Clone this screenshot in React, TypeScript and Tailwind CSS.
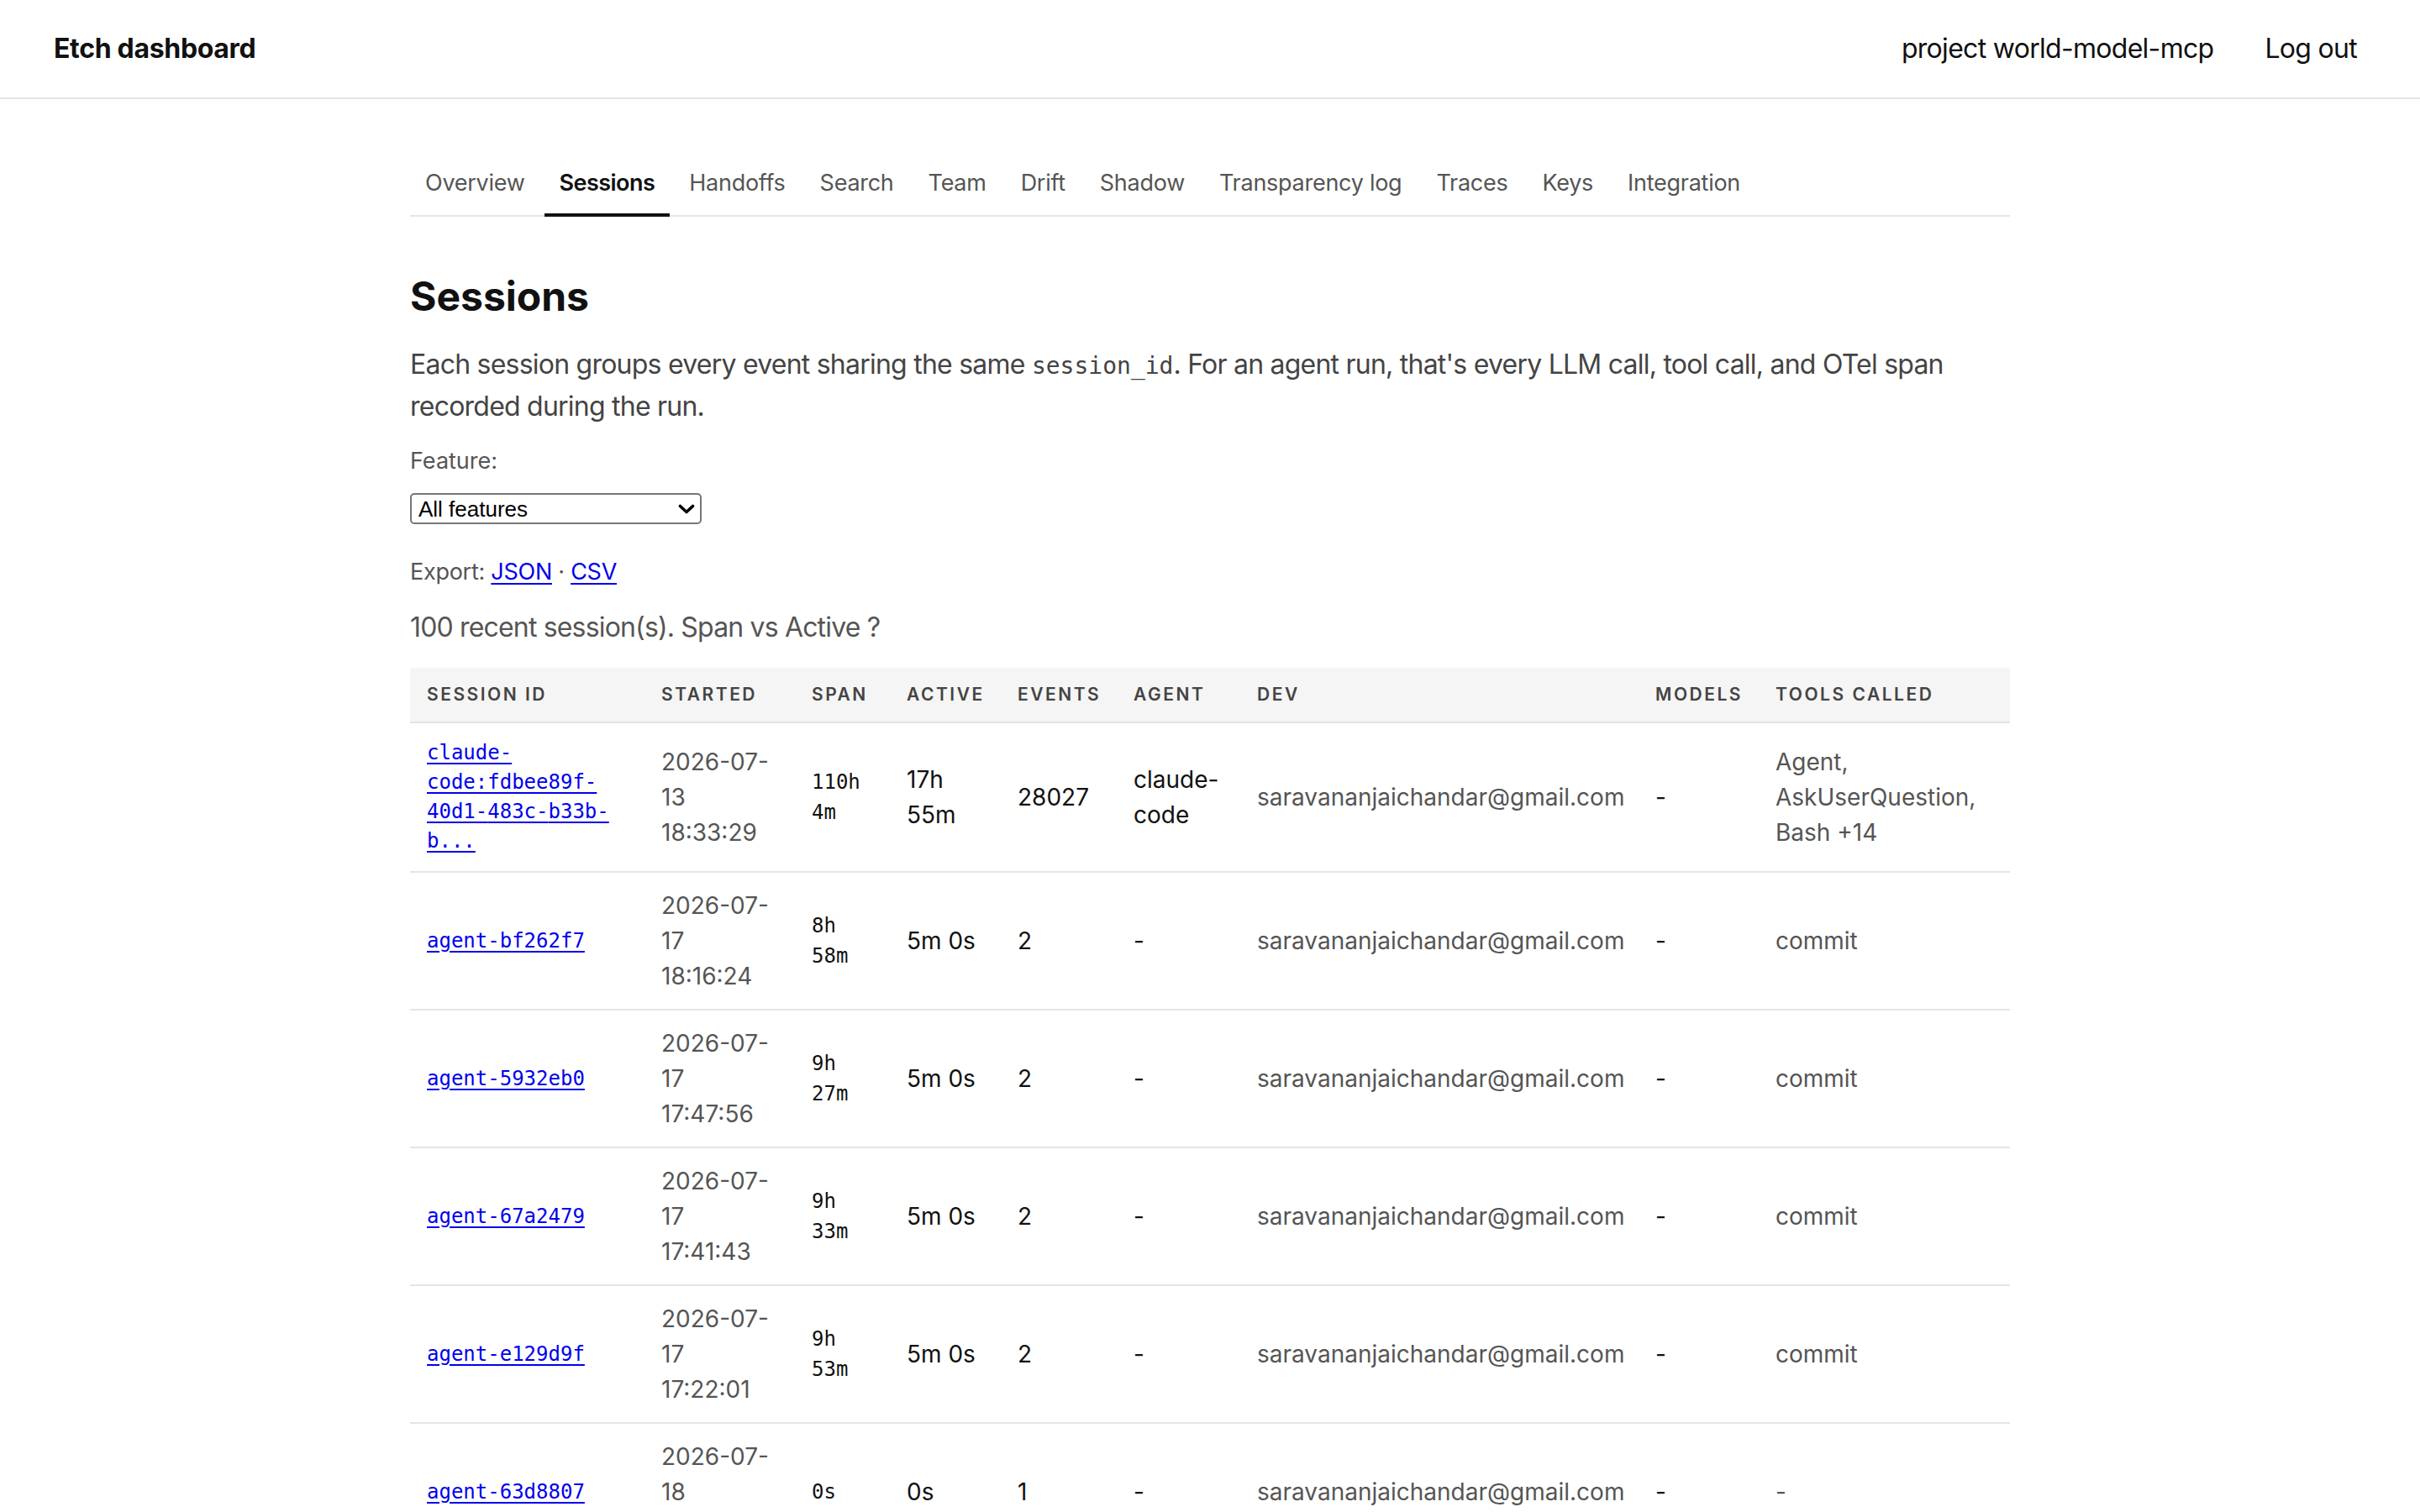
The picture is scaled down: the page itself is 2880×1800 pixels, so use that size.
import React from "react";

const tabs = ["Overview", "Sessions", "Handoffs", "Search", "Team", "Drift", "Shadow", "Transparency log", "Traces", "Keys", "Integration"];

type Row = {
  id: React.ReactNode;
  started: [string, string, string];
  span: string;
  active: string;
  events: string;
  agent: React.ReactNode;
  models: string;
  tools: React.ReactNode;
};

const email = "saravananjaichandar@gmail.com";

const rows: Row[] = [
  {
    id: (
      <>
        claude-<wbr />code:fdbee89f-<wbr />40d1-<wbr />483c-<wbr />b33b-<wbr />b...
      </>
    ),
    started: ["2026-07-", "13", "18:33:29"],
    span: "110h 4m",
    active: "17h 55m",
    events: "28027",
    agent: (
      <>
        claude-<wbr />code
      </>
    ),
    models: "-",
    tools: "Agent, AskUserQuestion, Bash +14",
  },
  { id: "agent-bf262f7", started: ["2026-07-", "17", "18:16:24"], span: "8h 58m", active: "5m 0s", events: "2", agent: "-", models: "-", tools: "commit" },
  { id: "agent-5932eb0", started: ["2026-07-", "17", "17:47:56"], span: "9h 27m", active: "5m 0s", events: "2", agent: "-", models: "-", tools: "commit" },
  { id: "agent-67a2479", started: ["2026-07-", "17", "17:41:43"], span: "9h 33m", active: "5m 0s", events: "2", agent: "-", models: "-", tools: "commit" },
  { id: "agent-e129d9f", started: ["2026-07-", "17", "17:22:01"], span: "9h 53m", active: "5m 0s", events: "2", agent: "-", models: "-", tools: "commit" },
  { id: "agent-63d8807", started: ["2026-07-", "18", "03:14:08"], span: "0s", active: "0s", events: "1", agent: "-", models: "-", tools: "-" },
  { id: "agent-2c41a9e", started: ["2026-07-", "17", "16:58:30"], span: "9h 41m", active: "5m 0s", events: "2", agent: "-", models: "-", tools: "commit" },
  { id: "agent-91fd0b3", started: ["2026-07-", "17", "16:40:12"], span: "9h 59m", active: "5m 0s", events: "2", agent: "-", models: "-", tools: "commit" },
];

const headers = ["Session ID", "Started", "Span", "Active", "Events", "Agent", "Dev", "Models", "Tools called"];

export default function App() {
  return (
    <div className="min-h-screen bg-white font-['Inter',sans-serif] text-[#111]">
      <header className="flex h-[118px] items-center justify-between border-b-2 border-[#e5e5e5] pl-[64px] pr-[75px]">
        <div className="text-[32px] font-bold leading-[48px] tracking-[-0.01em]">Etch dashboard</div>
        <nav className="flex items-center gap-[61px] text-[32px] leading-[48px] tracking-[-0.022em]">
          <span>project world-model-mcp</span>
          <span>Log out</span>
        </nav>
      </header>

      <main className="mx-auto w-[1904px] pt-[63px] pb-[80px]">
        <nav className="flex gap-[5px] border-b-2 border-[#e5e5e5]">
          {tabs.map((t) => (
            <span
              key={t}
              className={
                t === "Sessions"
                  ? "-mb-[2px] border-b-4 border-[#111] px-[18px] pt-[16px] pb-[15px] text-[27px] font-semibold leading-[42px] tracking-[-0.02em] text-[#111]"
                  : "-mb-[2px] border-b-4 border-transparent px-[18px] pt-[16px] pb-[15px] text-[27px] leading-[42px] tracking-[-0.01em] text-[#555]"
              }
            >
              {t}
            </span>
          ))}
        </nav>

        <h1 className="mt-[66px] text-[48px] font-bold leading-[58px] text-[#111]">Sessions</h1>

        <p className="mt-[28px] text-[32px] leading-[48px] tracking-[-0.024em] text-[#444]">
          Each session groups every event sharing the same{" "}
          <code className="font-['DejaVu_Sans_Mono',monospace] text-[28px] tracking-normal">session_id</code>. For an agent run, that's every LLM call, tool call, and OTel span recorded during the run.
        </p>

        <div className="mt-[20px] text-[27px] leading-[42px] text-[#555]">Feature:</div>

        <div className="mt-[17px] flex h-[37px] w-[347px] items-center justify-between rounded-[5px] border-2 border-[#767676] pl-[8px] pr-[5px] font-['Liberation_Sans',Arial,sans-serif] text-[26px] text-black">
          <span className="leading-[30px]">All features</span>
          <svg width="20" height="12" viewBox="0 0 20 12" className="mr-[1px]">
            <path d="M2.5 2.5 L10 9.5 L17.5 2.5" fill="none" stroke="#000" strokeWidth="3.6" strokeLinecap="round" strokeLinejoin="round" />
          </svg>
        </div>

        <div className="mt-[36px] text-[27px] leading-[42px] tracking-[-0.01em] text-[#555]">
          Export:{" "}
          <a className="text-[#0000ee] underline underline-offset-[4px]" href="#">
            JSON
          </a>{" "}
          ·{" "}
          <a className="text-[#0000ee] underline underline-offset-[4px]" href="#">
            CSV
          </a>
        </div>

        <div className="mt-[21px] text-[32px] leading-[48px] tracking-[-0.026em] text-[#555]">100 recent session(s). Span vs Active ?</div>

        <table className="mt-[24px] w-full table-fixed border-separate border-spacing-0">
          <colgroup>
            <col className="w-[279px]" />
            <col className="w-[179px]" />
            <col className="w-[113px]" />
            <col className="w-[132px]" />
            <col className="w-[138px]" />
            <col className="w-[147px]" />
            <col className="w-[474px]" />
            <col className="w-[143px]" />
            <col className="w-[299px]" />
          </colgroup>
          <thead>
            <tr className="bg-[#f5f5f5]">
              {headers.map((h) => (
                <th
                  key={h}
                  className="border-b-2 border-[#e2e2e2] px-[20px] py-[16px] text-left text-[21px] font-semibold uppercase leading-[32px] tracking-[0.12em] whitespace-nowrap text-[#444]"
                >
                  {h}
                </th>
              ))}
            </tr>
          </thead>
          <tbody>
            {rows.map((r, i) => (
              <tr key={i}>
                <td className="border-b-2 border-[#e5e5e5] px-[20px] py-[18px] align-middle">
                  <a href="#" className="font-['DejaVu_Sans_Mono',monospace] text-[24px] leading-[35px] text-[#0000ee] underline underline-offset-[4px]">
                    {r.id}
                  </a>
                </td>
                <td className="border-b-2 border-[#e5e5e5] px-[20px] py-[18px] align-middle text-[28px] leading-[42px] text-[#555]">
                  {r.started[0]}
                  <wbr />
                  {r.started[1]} {r.started[2]}
                </td>
                <td className="border-b-2 border-[#e5e5e5] px-[20px] py-[18px] align-middle font-['DejaVu_Sans_Mono',monospace] text-[24px] leading-[36px] text-[#111]">
                  {r.span}
                </td>
                <td className="border-b-2 border-[#e5e5e5] px-[20px] py-[18px] align-middle text-[28px] leading-[42px] text-[#111]">{r.active}</td>
                <td className="border-b-2 border-[#e5e5e5] px-[20px] py-[18px] align-middle text-[28px] leading-[42px] text-[#111]">{r.events}</td>
                <td className="border-b-2 border-[#e5e5e5] px-[20px] py-[18px] align-middle text-[28px] leading-[42px] text-[#111]">{r.agent}</td>
                <td className="border-b-2 border-[#e5e5e5] px-[20px] py-[18px] align-middle text-[28px] leading-[42px] whitespace-nowrap text-[#555]">{email}</td>
                <td className="border-b-2 border-[#e5e5e5] px-[20px] py-[18px] align-middle text-[28px] leading-[42px] text-[#111]">{r.models}</td>
                <td className="border-b-2 border-[#e5e5e5] px-[20px] py-[18px] align-middle text-[28px] leading-[42px] text-[#555]">{r.tools}</td>
              </tr>
            ))}
          </tbody>
        </table>
      </main>
    </div>
  );
}
